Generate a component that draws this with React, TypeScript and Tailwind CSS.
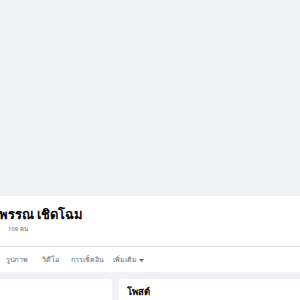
export default function App() {
  return (
    <div
      className="w-[300px] h-[300px] overflow-hidden bg-[#f0f2f5]"
      style={{ fontFamily: '"Noto Sans", "Liberation Sans", sans-serif' }}
    >
      <div className="h-[196px] bg-[#f0f1f4]" />
      <div className="bg-white h-[76px] flex flex-col">
        <div className="h-[50px] flex flex-col pt-[9px]">
          <div className="text-[13px] leading-[18px] font-bold text-[#050505] -ml-[1px] whitespace-nowrap">
            พรรณ เชิดโฉม
          </div>
          <div className="text-[6px] leading-[9px] text-[#65676b] ml-[8px] mt-[2px] whitespace-nowrap">
            109 คน
          </div>
        </div>
        <div className="border-t border-[#dadde1] flex items-center pt-[1px] h-[26px] text-[7px] text-[#65676b] font-medium whitespace-nowrap">
          <span className="ml-[6px]">รูปภาพ</span>
          <span className="ml-[14px]">วิดีโอ</span>
          <span className="ml-[12px]">การเช็คอิน</span>
          <span className="ml-[9px] flex items-center gap-[2px]">
            เพิ่มเติม
            <svg width="5" height="3" viewBox="0 0 5 3">
              <path d="M0 0 L2.5 3 L5 0 Z" fill="#65676b" />
            </svg>
          </span>
        </div>
      </div>
      <div className="flex gap-[7px] pt-[7px]">
        <div className="w-[112px] h-[40px] bg-white rounded-tr-[4px] shrink-0" />
        <div className="flex-1 h-[40px] bg-white rounded-tl-[4px] pl-[8px] pt-[6px]">
          <div className="text-[9.5px] font-bold text-[#050505]">โพสต์</div>
        </div>
      </div>
    </div>
  );
}
